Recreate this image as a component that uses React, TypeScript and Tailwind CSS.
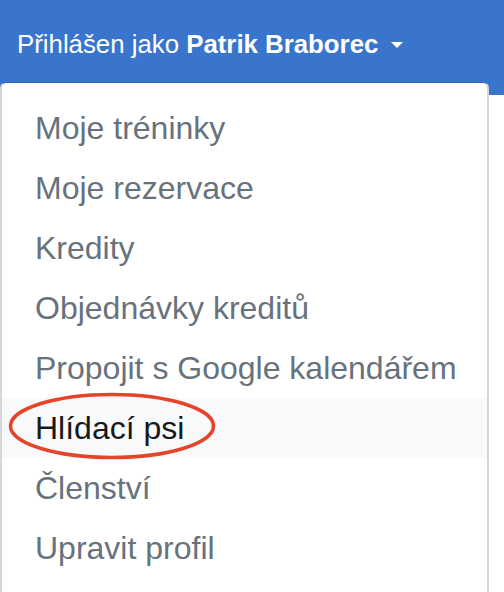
import React from 'react';

const items = [
  'Moje tréninky',
  'Moje rezervace',
  'Kredity',
  'Objednávky kreditů',
  'Propojit s Google kalendářem',
  'Hlídací psi',
  'Členství',
  'Upravit profil',
];

export default function App() {
  return (
    <div className="relative h-[592px] w-[504px] overflow-hidden bg-white font-['Liberation_Sans',Arial,sans-serif]">
      <header className="h-[95px] bg-[#3975cc] pl-[17px] pt-[29px]">
        <div className="flex items-center text-[25.8px] leading-[30px] text-white">
          <span>
            Přihlášen jako <b className="font-bold">Patrik Braborec</b>
          </span>
          <span className="ml-[13px] mt-[1px] h-0 w-0 border-x-[6.5px] border-t-[6px] border-x-transparent border-t-white" />
        </div>
      </header>

      {/* open dropdown menu */}
      <div className="absolute left-0 top-[82px] h-[530px] w-[489px] rounded-t-[6px] border-x-2 border-t border-[#d6d6d6] border-t-[#3266b8] bg-white pt-[15px]">
        {items.map((item) => {
          const active = item === 'Hlídací psi';
          return (
            <div
              key={item}
              className={
                active
                  ? 'flex h-[60px] items-center bg-[#f8f9fa] pl-[33px] text-[32px] text-[#16181b]'
                  : 'flex h-[60px] items-center pl-[33px] text-[32px] text-[#67727c]'
              }
            >
              {item}
            </div>
          );
        })}
      </div>

      {/* hand-drawn highlight */}
      <svg className="absolute left-[8px] top-[392px]" width="208" height="68" viewBox="0 0 208 68">
        <ellipse cx="104" cy="34" rx="101.5" ry="31.5" fill="none" stroke="#e5432a" strokeWidth="3.5" />
      </svg>
    </div>
  );
}
